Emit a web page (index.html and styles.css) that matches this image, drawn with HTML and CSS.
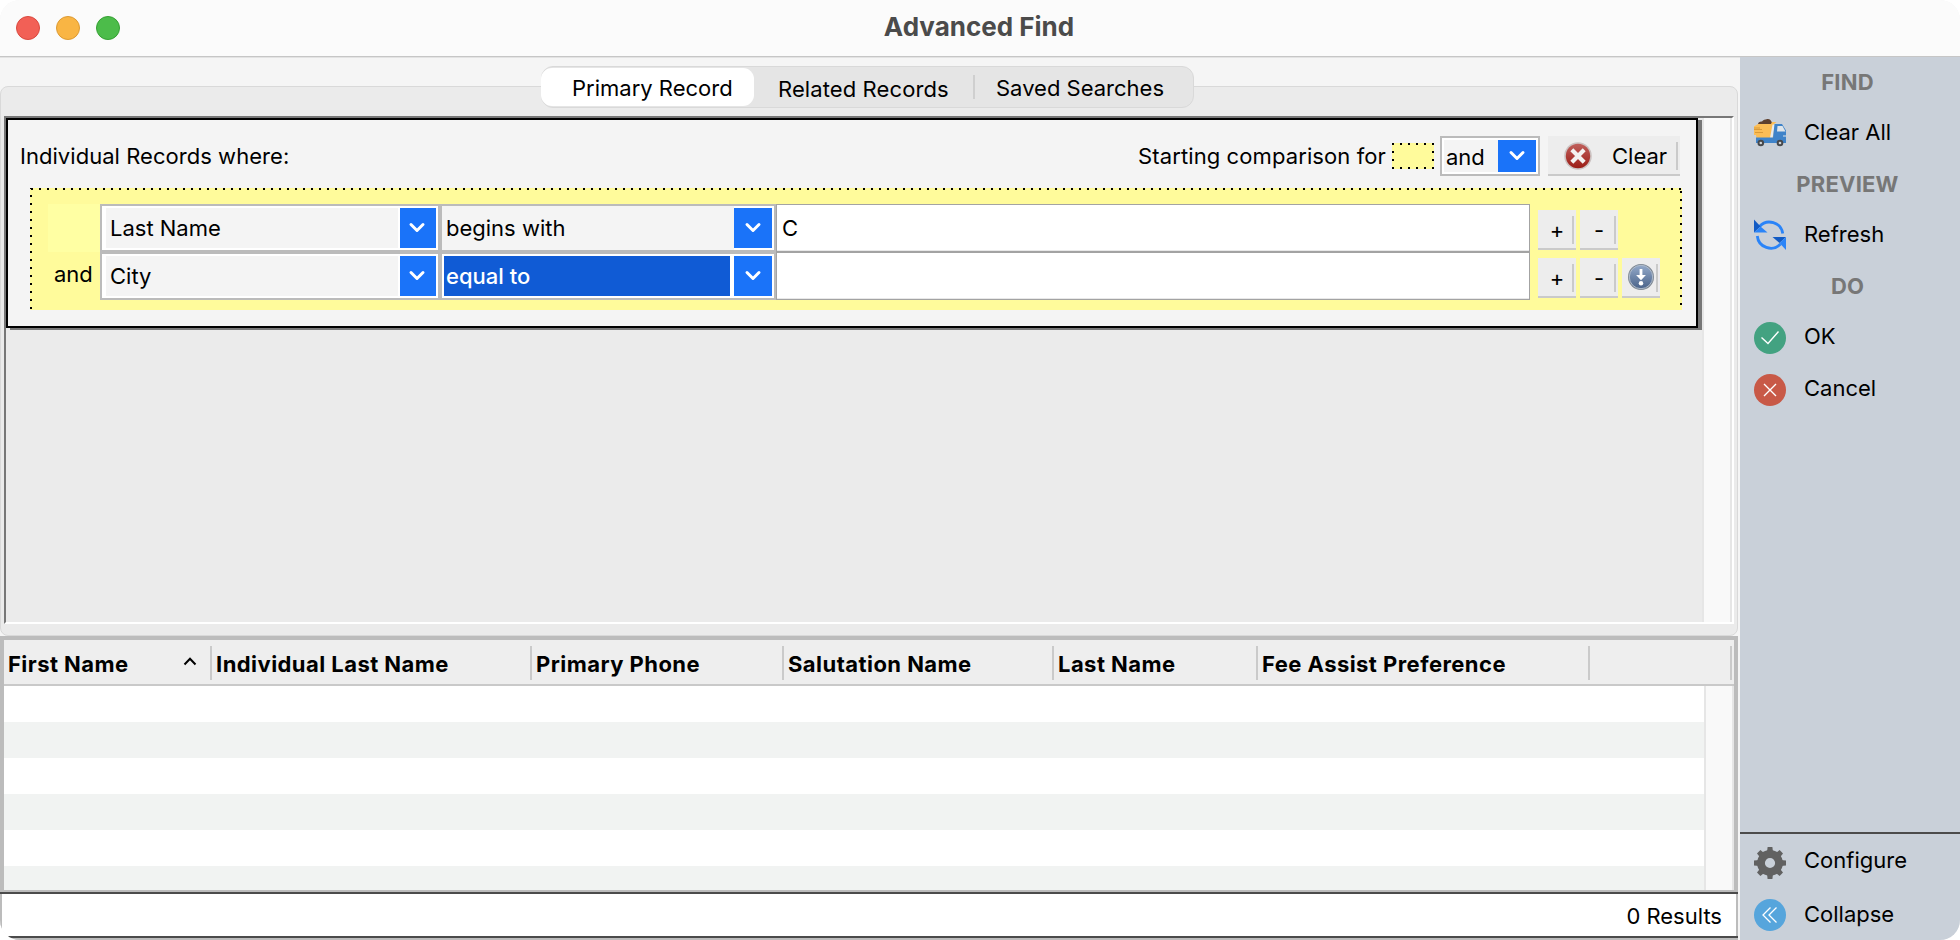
FILE: index.html
```html
<!DOCTYPE html>
<html lang="en">
<head>
    <meta charset="UTF-8">
    <meta name="viewport" content="width=device-width, initial-scale=1.0">
    <title>Advanced Find</title>
    <link rel="stylesheet" href="styles.css">
</head>
<body>

<div class="window">
    <header class="titlebar">
        <div class="lights">
            <span class="light red"></span>
            <span class="light yellow"></span>
            <span class="light green"></span>
        </div>
        <h1>Advanced Find</h1>
    </header>

    <div class="content">
        <main class="main">
            <!-- Search criteria -->
            <section class="tab-area">
                <nav class="tabs">
                    <button class="tab active">Primary Record</button>
                    <button class="tab related">Related Records</button>
                    <button class="tab saved">Saved Searches</button>
                </nav>
                <div class="tab-panel">
                    <div class="scroll-pane">
                        <div class="viewport">
                            <div class="criteria">
                                <div class="criteria-head">
                                    <span class="where">Individual Records where:</span>
                                    <span class="starting">Starting comparison for</span>
                                    <span class="dots swatch"></span>
                                    <div class="combo combo-and">
                                        <span class="value">and</span>
                                        <span class="arrow"><svg width="18" height="12" viewBox="0 0 18 12"><path d="M3 2.5l6 6 6-6"/></svg></span>
                                    </div>
                                    <button class="btn btn-clear">
                                        <svg width="28" height="28" viewBox="0 0 28 28">
                                            <defs>
                                                <linearGradient id="redGrad" x1="0" y1="0" x2="0" y2="1">
                                                    <stop offset="0" stop-color="#c0605c"/>
                                                    <stop offset="1" stop-color="#9c1d16"/>
                                                </linearGradient>
                                            </defs>
                                            <circle cx="14" cy="14" r="13.8" fill="#ccc3c2"/>
                                            <circle cx="14" cy="14" r="12.2" fill="url(#redGrad)"/>
                                            <path d="M9.3 9.3l9.4 9.4M18.7 9.3l-9.4 9.4" stroke="#f4f2f1" stroke-width="4.200" stroke-linecap="square"/>
                                        </svg>
                                        <span>Clear</span>
                                    </button>
                                </div>

                                <div class="group dots">
                                    <div class="rule">
                                        <span class="joiner blank"></span>
                                        <div class="combo combo-field">
                                            <span class="value">Last Name</span>
                                            <span class="arrow"><svg width="18" height="12" viewBox="0 0 18 12"><path d="M3 2.5l6 6 6-6"/></svg></span>
                                        </div>
                                        <div class="combo combo-op">
                                            <span class="value begins">begins with</span>
                                            <span class="arrow"><svg width="18" height="12" viewBox="0 0 18 12"><path d="M3 2.5l6 6 6-6"/></svg></span>
                                        </div>
                                        <input class="text" type="text" value="C">
                                        <div class="rule-btns">
                                            <button class="btn btn-sm">+</button>
                                            <button class="btn btn-sm">-</button>
                                        </div>
                                    </div>
                                    <div class="rule">
                                        <span class="joiner">and</span>
                                        <div class="combo combo-field">
                                            <span class="value">City</span>
                                            <span class="arrow"><svg width="18" height="12" viewBox="0 0 18 12"><path d="M3 2.5l6 6 6-6"/></svg></span>
                                        </div>
                                        <div class="combo combo-op">
                                            <span class="value selected">equal to</span>
                                            <span class="arrow"><svg width="18" height="12" viewBox="0 0 18 12"><path d="M3 2.5l6 6 6-6"/></svg></span>
                                        </div>
                                        <input class="text" type="text" value="">
                                        <div class="rule-btns">
                                            <button class="btn btn-sm">+</button>
                                            <button class="btn btn-sm">-</button>
                                            <button class="btn btn-sm btn-down">
                                                <svg width="26" height="26" viewBox="0 0 28 28">
                                                    <defs>
                                                        <linearGradient id="blueGrad" x1="0" y1="0" x2="0" y2="1">
                                                            <stop offset="0" stop-color="#93a9c9"/>
                                                            <stop offset="1" stop-color="#4a6389"/>
                                                        </linearGradient>
                                                    </defs>
                                                    <circle cx="14" cy="14" r="14" fill="#7d8792"/>
                                                    <circle cx="14" cy="14" r="12.600" fill="url(#blueGrad)" stroke="#b3bfce" stroke-width="1"/>
                                                    <path d="M12.500 5.500h3v6.300h3.800L14 17.500l-5.300-5.700h3.800z" fill="#fff"/>
                                                    <circle cx="14" cy="20.800" r="2.400" fill="#fff"/>
                                                </svg>
                                            </button>
                                        </div>
                                    </div>
                                </div>
                            </div>
                        </div>
                        <div class="scrollbar"></div>
                    </div>
                </div>
            </section>

            <!-- Results -->
            <section class="results">
                <div class="results-head">
                    <span class="col c1">First Name
                        <svg width="14" height="9" viewBox="0 0 14 9"><path d="M1.5 7.5L7 1.8l5.500 5.700"/></svg>
                    </span>
                    <span class="col c2">Individual Last Name</span>
                    <span class="col c3">Primary Phone</span>
                    <span class="col c4">Salutation Name</span>
                    <span class="col c5">Last Name</span>
                    <span class="col c6">Fee Assist Preference</span>
                    <span class="col c7"></span>
                </div>
                <div class="results-body">
                    <div class="rows"></div>
                    <div class="scrollbar"></div>
                </div>
            </section>
            <footer class="status">0 Results</footer>
        </main>

        <aside class="sidebar">
            <h2>FIND</h2>
            <a class="item">
                <svg width="32" height="32" viewBox="0 0 32 32">
                    <path d="M4 7.500C4 5 6 4.300 8 4.500 9 2.500 11.500 2.600 12.500 2.200 15 1.200 17 3 17 4c1.500 1 .8 3 .5 3.500z" fill="#5e402e"/>
                    <path d="M0 9.500l4-2.500h13l1-2h4.500L20 7l-1 14H2.500L2 18H0z" fill="#fbbd56"/>
                    <path d="M0 12.500h8M1 15.500h8M0 11h6" stroke="#d99a39" stroke-width="1"/>
                    <path d="M18.500 7.500H21L18.500 21H16z" fill="#e6ebef"/>
                    <path d="M20.500 7H28l4 6.500V26H2v-5.500h17z" fill="#3f83c9"/>
                    <path d="M23.500 9h5l3 5.500H23z" fill="#dfe5ea"/>
                    <path d="M29 19h3" stroke="#dfe5ea"/>
                    <circle cx="6.800" cy="26" r="3.300" fill="#46484b"/><circle cx="6.800" cy="26" r="1.300" fill="#cfd2d5"/>
                    <circle cx="26" cy="26" r="3.300" fill="#46484b"/><circle cx="26" cy="26" r="1.300" fill="#cfd2d5"/>
                </svg>
                <span>Clear All</span>
            </a>
            <h2>PREVIEW</h2>
            <a class="item">
                <svg width="32" height="32" viewBox="0 0 32 32">
                    <g fill="none" stroke="#2a84f8" stroke-width="2.800">
                        <path d="M5.500 7.500A13.500 13.500 0 0 1 28.800 14.500"/>
                        <path d="M3.300 17a13.500 13.500 0 0 0 23.200 8"/>
                    </g>
                    <path d="M0 .5v13l6.500-6z" fill="#125bc4"/><path d="M0 13.500l6.500-6 7 6z" fill="#2a84f8"/>
                    <path d="M18.500 18H32l-6.500 6z" fill="#125bc4"/><path d="M32 18v13l-6.500-7z" fill="#2a84f8"/>
                </svg>
                <span>Refresh</span>
            </a>
            <h2>DO</h2>
            <a class="item low">
                <svg width="32" height="32" viewBox="0 0 32 32">
                    <circle cx="16" cy="16" r="16" fill="#43a281"/>
                    <path d="M7.500 15.500l6.500 6L24.500 9.500" fill="none" stroke="#fff" stroke-width="1.400"/>
                </svg>
                <span>OK</span>
            </a>
            <a class="item low">
                <svg width="32" height="32" viewBox="0 0 32 32">
                    <circle cx="16" cy="16" r="16" fill="#c85947"/>
                    <path d="M10 10l12 12M22 10L10 22" stroke="#fff" stroke-width="1.400"/>
                </svg>
                <span>Cancel</span>
            </a>

            <div class="sidebar-foot">
                <a class="item configure">
                    <svg width="32" height="32" viewBox="0 0 32 32">
                        <g fill="#616161">
                            <path id="tooth" d="M13 5.500l.6-5.500h4.800l.6 5.500z"/>
                            <use href="#tooth" transform="rotate(45 16 16)"/>
                            <use href="#tooth" transform="rotate(90 16 16)"/>
                            <use href="#tooth" transform="rotate(135 16 16)"/>
                            <use href="#tooth" transform="rotate(180 16 16)"/>
                            <use href="#tooth" transform="rotate(225 16 16)"/>
                            <use href="#tooth" transform="rotate(270 16 16)"/>
                            <use href="#tooth" transform="rotate(315 16 16)"/>
                        </g>
                        <circle cx="16" cy="16" r="9" fill="none" stroke="#616161" stroke-width="7.800"/>
                    </svg>
                    <span>Configure</span>
                </a>
                <a class="item">
                    <svg width="32" height="32" viewBox="0 0 32 32">
                        <circle cx="16" cy="16" r="16" fill="#56a5dc"/>
                        <path d="M16.500 8.500L9 16l7.500 7.500M22.500 8.500L15 16l7.500 7.500" fill="none" stroke="#fff" stroke-width="1.300"/>
                    </svg>
                    <span>Collapse</span>
                </a>
            </div>
        </aside>
    </div>
</div>

</body>
</html>
```

FILE: styles.css
```css
* {
    box-sizing: border-box;
}

body {
    margin: 0;
    background-color: #fff;
    font-family: Inter, "Liberation Sans", sans-serif;
    font-size: 22px;
    color: #000;
}

h1, h2 {
    margin: 0;
}

button, input {
    font: inherit;
    color: inherit;
    letter-spacing: inherit;
    border: none;
    margin: 0;
    padding: 0;
    border-radius: 0;
    outline: none;
}

svg {
    display: block;
    flex: none;
}

.window {
    width: 1960px;
    height: 940px;
    display: flex;
    flex-direction: column;
    border-radius: 20px;
    overflow: hidden;
    background-color: #f5f5f5;
}

/* title bar */
.titlebar {
    height: 58px;
    flex: none;
    display: grid;
    grid-template-columns: 1fr auto 1fr;
    align-items: center;
    padding-left: 16px;
    padding-bottom: 1px;
    background-color: #fbfbfb;
    border-bottom: 1px solid #e3e3e3;
    box-shadow: inset 0 -1px 0 #c6c6c6;
}

.lights {
    display: flex;
    gap: 16px;
}

.light {
    width: 24px;
    height: 24px;
    border-radius: 50%;
}

.red {
    background-color: #f26056;
    border: 1px solid #d9493f;
}

.yellow {
    background-color: #f9b544;
    border: 1px solid #dc9a33;
}

.green {
    background-color: #4cbc4a;
    border: 1px solid #35a033;
}

.titlebar h1 {
    font-size: 26px;
    line-height: 30px;
    font-weight: 700;
    color: #4b4b4b;
    padding: 0 18px 2px 0;
}

.content {
    flex: 1;
    display: flex;
    min-height: 0;
}

.main {
    width: 1740px;
    flex: none;
    display: flex;
    flex-direction: column;
    padding-right: 2px;
}

/* tabs */
.tab-area {
    height: 578px;
    flex: none;
    display: flex;
    flex-direction: column;
    align-items: center;
    padding-top: 8px;
}

.tabs {
    height: 42px;
    width: 653px;
    flex: none;
    z-index: 1;
    display: flex;
    align-items: center;
    background-color: #e5e5e5;
    border: 1px solid #d9d9d9;
    border-radius: 12px;
    margin: 0 3px -22px 0;
}

.tab {
    background: none;
    height: 38px;
    padding-top: 2px;
    text-align: left;
    white-space: nowrap;
}

.tab.active {
    width: 213px;
    margin-left: -1px;
    padding-left: 31px;
    background-color: #fff;
    border-radius: 11px;
}

.tab.related {
    width: 221px;
    height: 24px;
    padding-left: 24px;
    border-right: 2px solid #cfcfcf;
    line-height: 24px;
    letter-spacing: 0.1px;
}

.tab.saved {
    padding-left: 21px;
}

.tab-panel {
    width: 1738px;
    flex: 1;
    background-color: #ebebeb;
    border: 1px solid #d9d9d9;
    border-radius: 8px;
    padding: 29px 3px 11px;
}

.scroll-pane {
    height: 508px;
    display: flex;
    border-top: 2px solid #777;
    border-left: 2px solid #777;
    border-right: 2px solid #fff;
    border-bottom: 2px solid #fff;
}

.viewport {
    flex: 1;
}

.scrollbar {
    width: 30px;
    flex: none;
    background-color: #f9f9f9;
    border-left: 2px solid #e6e6e6;
    border-right: 2px solid #e6e6e6;
}

/* criteria box */
.criteria {
    width: 1692px;
    height: 210px;
    border: 2px solid #000;
    background-color: #f4f4f4;
    box-shadow: 4px 2px 0 #777;
    padding: 16px 16px 0 12px;
}

.criteria-head {
    display: flex;
    align-items: center;
    height: 40px;
}

.where {
    flex: 1;
    letter-spacing: 0.04px;
}

.starting {
    margin-right: 6px;
    letter-spacing: 0.1px;
}

/* dotted outline, 2px dots every 8px */
.dots {
    background-color: #fffb9b;
    background-image:
        repeating-linear-gradient(to right, transparent 0 1px, #000 1px 3px, transparent 3px 8px),
        repeating-linear-gradient(to bottom, #000 0 1px, transparent 1px 7px, #000 7px 8px),
        repeating-linear-gradient(to bottom, transparent 0 3px, #000 3px 5px, transparent 5px 8px);
    background-size: 100% 2px, 2px 100%, 2px 100%;
    background-position: 0 0, 0 0, 100% 0;
    background-repeat: no-repeat;
}

.swatch {
    width: 42px;
    height: 26px;
    margin-right: 6px;
    background-image:
        repeating-linear-gradient(to right, #000 0 2px, transparent 2px 8px),
        repeating-linear-gradient(to right, #000 0 2px, transparent 2px 8px),
        repeating-linear-gradient(to bottom, #000 0 2px, transparent 2px 8px),
        repeating-linear-gradient(to bottom, #000 0 2px, transparent 2px 8px);
    background-size: 100% 2px, 100% 2px, 2px 100%, 2px 100%;
    background-position: 0 0, 0 100%, 0 0, 100% 0;
}

.combo {
    display: flex;
    border: 2px solid #bbb;
    background-color: #fff;
    padding: 2px;
    flex: none;
}

.combo .value {
    flex: 1;
    background-color: #f4f4f4;
    display: flex;
    align-items: center;
    white-space: nowrap;
}

.combo .arrow {
    background-color: #1a73f9;
    width: 36px;
    display: flex;
    align-items: center;
    justify-content: center;
}

.arrow svg path {
    fill: none;
    stroke: #fff;
    stroke-width: 3;
    stroke-linecap: round;
    stroke-linejoin: round;
}

.combo-and {
    width: 100px;
    height: 40px;
    margin-right: 8px;
}

.combo-and .value {
    padding: 1px 0 0 2px;
}

.combo-and .arrow {
    width: 38px;
}

.btn {
    background-color: #ededed;
    border-bottom: 2px solid #cacaca;
    background-image: linear-gradient(#cacaca, #cacaca);
    background-size: 2px 28px;
    background-position: right 2px top 6px;
    background-repeat: no-repeat;
    display: flex;
    align-items: center;
}

.btn-clear {
    width: 132px;
    height: 40px;
    padding: 2px 0 0 16px;
    gap: 20px;
}

.group {
    margin: 12px 0 0 10px;
    width: 1652px;
    height: 122px;
    padding: 16px 0 0 18px;
}

.rule {
    display: flex;
    height: 48px;
}

.joiner {
    width: 52px;
    flex: none;
    display: flex;
    align-items: center;
    padding-left: 6px;
    padding-bottom: 4px;
}

.joiner.blank {
    background-color: #ffffa3;
}

.combo-field {
    width: 340px;
    padding-left: 4px;
}

.combo-field .value {
    padding-left: 4px;
    border-right: 2px solid #fff;
}

.combo-field .arrow {
    padding-right: 2px;
}

.combo-op {
    width: 336px;
}

.combo-op .arrow {
    width: 38px;
}

.combo-op .value {
    padding-left: 2px;
}

.combo-op .value.begins {
    margin: -2px 0 -2px -2px;
    padding-left: 4px;
}

.combo-op .value.selected {
    background-color: #105bd5;
    color: #fff;
    font-weight: 500;
    margin-right: 4px;
}

.text {
    width: 754px;
    border: 1px solid #a3a3a3;
    box-shadow: inset 0 -1px 0 #e8e8e8;
    padding-left: 5px;
    background-color: #fff;
}

.rule-btns {
    display: flex;
    gap: 4px;
    padding: 6px 0 0 8px;
}

.btn-sm {
    width: 38px;
    height: 40px;
    justify-content: center;
    padding-top: 2px;
}

.btn-down {
    padding: 0;
}

/* results table */
.results {
    height: 256px;
    flex: none;
    display: flex;
    flex-direction: column;
    border: 4px solid #bcbcbc;
    border-bottom-width: 2px;
}

.results-head {
    height: 46px;
    flex: none;
    display: flex;
    align-items: flex-start;
    padding-top: 6px;
    background-color: #eee;
    border-bottom: 2px solid #c9c9c9;
    font-weight: 700;
    letter-spacing: 0.45px;
}

.col {
    height: 34px;
    border-right: 2px solid #cacaca;
    padding: 2px 0 0 4px;
    display: flex;
    align-items: center;
    white-space: nowrap;
}

.c1 {
    width: 208px;
    justify-content: space-between;
    padding-right: 13px;
}

.c1 svg {
    margin-bottom: 6px;
}

.c1 path {
    fill: none;
    stroke: #000;
    stroke-width: 2;
}

.c2 { width: 320px; }
.c3 { width: 252px; }
.c4 { width: 270px; }
.c5 { width: 204px; }
.c6 { width: 332px; }
.c7 { width: 142px; }

.results-body {
    flex: 1;
    display: flex;
}

.rows {
    flex: 1;
    background: repeating-linear-gradient(#fff 0 36px, #f1f3f2 36px 72px);
}

.status {
    height: 46px;
    flex: none;
    display: flex;
    align-items: center;
    justify-content: flex-end;
    padding: 2px 16px 0 0;
    background-color: #fff;
    border: 2px solid #4b4b4b;
    border-width: 2px 0;
    box-shadow: inset 2px 0 0 #bcbcbc, inset -2px 0 0 #bcbcbc, 0 2px 0 #bcbcbc;
}

/* right sidebar */
.sidebar {
    flex: 1;
    display: flex;
    flex-direction: column;
    background-color: #c9d0d9;
    margin-top: -1px;
    padding: 1px 0 0 14px;
    z-index: 1;
}

.sidebar h2 {
    height: 48px;
    line-height: 48px;
    font-size: 22px;
    font-weight: 700;
    color: #777;
    text-align: center;
    padding-right: 19px;
    letter-spacing: 0.2px;
}

.item {
    display: flex;
    align-items: center;
    height: 52px;
    gap: 18px;
}

.item + h2 {
    margin-top: 2px;
}

.item svg {
    margin-top: 1px;
}

.item.low svg {
    margin-top: 4px;
}

.sidebar-foot {
    margin: auto 0 0 -14px;
    padding: 2px 0 0 14px;
    height: 108px;
    border-top: 2px solid #4b4b4b;
}

.configure span {
    padding-bottom: 4px;
}
```
